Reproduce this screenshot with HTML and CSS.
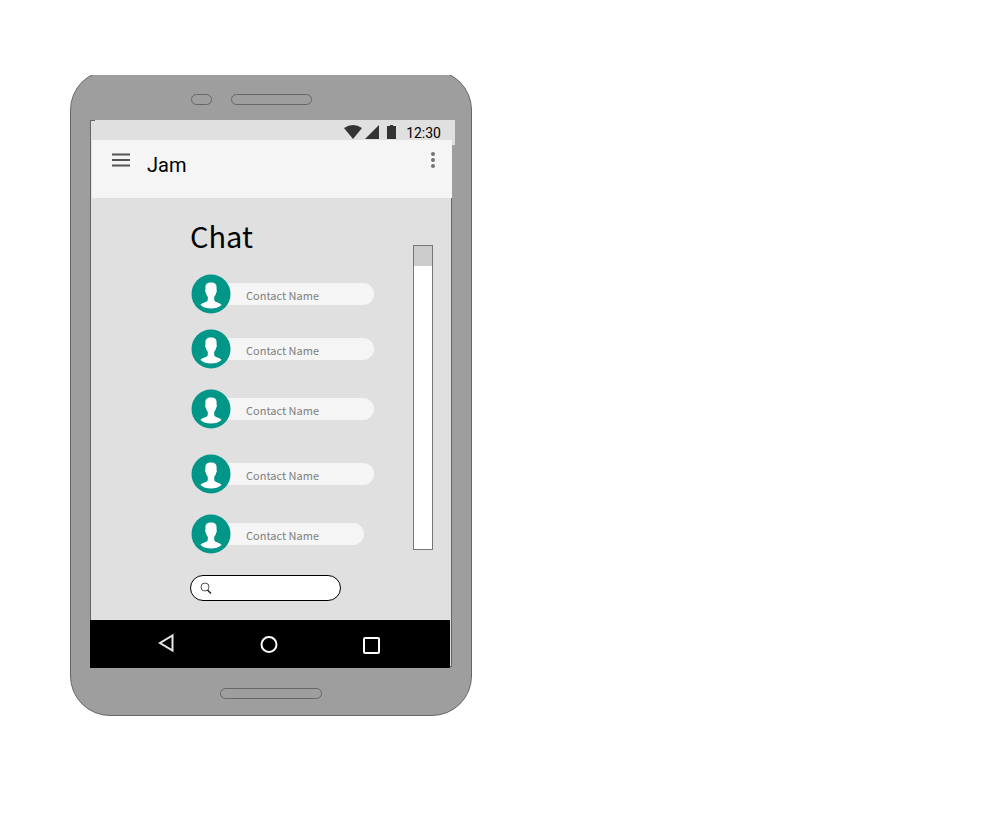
FILE: index.html
```html
<!DOCTYPE html>
<html lang="en">
<head>
<meta charset="utf-8">
<meta name="viewport" content="width=device-width, initial-scale=1">
<title>Jam</title>
<link rel="stylesheet" href="styles.css">
</head>
<body>
<svg class="defs" aria-hidden="true">
  <symbol id="person" viewBox="0 0 40 40">
    <circle cx="20" cy="20" r="19.5" fill="#009688"/>
    <path fill="#fff" d="M20 8.500c4 0 5.600 1.800 5.600 5v2.500c.5.300.3 2.200-.5 2.800-.2 1.700-1 3-1.900 4v3.200c.5 1.500 2 2.200 4 2.800 1.700.5 2.700 1.200 3.300 2.200-2.500 2.300-6.300 3.600-10.500 3.600s-8-1.300-10.500-3.600c.6-1 1.600-1.700 3.300-2.200 2-.6 3.500-1.300 4-2.800v-3.200c-.9-1-1.700-2.300-1.900-4-.8-.6-1-2.500-.5-2.800v-2.500c0-3.200 1.600-5 5.600-5z"/>
  </symbol>
</svg>
<div class="stage">
  <div class="phone">
    <div class="sensors">
      <span class="slot slot-short"></span>
      <span class="slot slot-speaker"></span>
    </div>
    <div class="screen">
      <div class="status">
        <svg width="53" height="16" viewBox="0 0 53 16" fill="#333" aria-hidden="true">
          <path d="M0 4Q9-2 18 4L9 15z"/>
          <path d="M21 15L35 1v14z"/>
          <path d="M43 2h3V1h3v1h3v13h-9z"/>
        </svg>
        <time>12:30</time>
      </div>
      <header class="appbar">
        <button class="icon-button" aria-label="Menu">
          <svg width="18" height="16" viewBox="0 0 18 16" aria-hidden="true"><path d="M0 2.500h18M0 8h18M0 13.500h18" stroke="#555" stroke-width="2"/></svg>
        </button>
        <h1>Jam</h1>
        <button class="icon-button" aria-label="More options">
          <svg width="4" height="16" viewBox="0 0 4 16" fill="#737373" aria-hidden="true"><circle cx="2" cy="2" r="2"/><circle cx="2" cy="8" r="2"/><circle cx="2" cy="14" r="2"/></svg>
        </button>
      </header>
      <main class="content">
        <div class="chat">
          <h2>Chat</h2>
          <ul class="contacts">
            <li><a class="contact" href="#"><svg class="avatar" aria-hidden="true"><use href="#person"/></svg><span class="name">Contact Name</span></a></li>
            <li><a class="contact" href="#"><svg class="avatar" aria-hidden="true"><use href="#person"/></svg><span class="name">Contact Name</span></a></li>
            <li><a class="contact" href="#"><svg class="avatar" aria-hidden="true"><use href="#person"/></svg><span class="name">Contact Name</span></a></li>
            <li><a class="contact" href="#"><svg class="avatar" aria-hidden="true"><use href="#person"/></svg><span class="name">Contact Name</span></a></li>
            <li><a class="contact contact-short" href="#"><svg class="avatar" aria-hidden="true"><use href="#person"/></svg><span class="name">Contact Name</span></a></li>
          </ul>
          <label class="search">
            <svg width="12" height="12" viewBox="0 0 12 12" fill="none" aria-hidden="true"><circle cx="5" cy="5" r="4" stroke="#555"/><path d="M7.500 8L11 11.500" stroke="#222" stroke-width="1.500"/></svg>
            <input type="search" aria-label="Search contacts">
          </label>
        </div>
        <div class="scrollbar"><div class="thumb"></div></div>
      </main>
      <nav class="navbar">
        <button class="icon-button" aria-label="Back">
          <svg width="18" height="22" viewBox="0 0 18 22" fill="none" aria-hidden="true"><path d="M15.500 2.500v15L3 10z" stroke="#e8e8e8" stroke-width="2"/></svg>
        </button>
        <button class="icon-button" aria-label="Home">
          <svg width="18" height="18" viewBox="0 0 18 18" fill="none" aria-hidden="true"><circle cx="9" cy="9.500" r="7.500" stroke="#fff" stroke-width="2"/></svg>
        </button>
        <button class="icon-button" aria-label="Recent apps">
          <svg width="18" height="20" viewBox="0 0 18 20" fill="none" aria-hidden="true"><rect x="2" y="4" width="15" height="15" rx="1" stroke="#fff" stroke-width="2"/></svg>
        </button>
      </nav>
    </div>
    <span class="slot slot-bottom"></span>
  </div>
</div>
</body>
</html>
```
FILE: styles.css
```css
* {
  box-sizing: border-box;
}

body {
  margin: 0;
  padding: 75px 70px;
  background: #fff;
  font-family: Roboto, "Liberation Sans", sans-serif;
  color: #000;
}

.defs {
  display: none;
}

h1, h2, ul {
  margin: 0;
  padding: 0;
  font-weight: 400;
}

.icon-button {
  display: flex;
  padding: 0;
  border: 0;
  background: none;
}

/* Cuts off the top edge of the phone body. */
.stage {
  max-width: 402px;
  overflow: hidden;
}

.phone {
  margin-top: -5px;
  padding: 23px 19px 16px;
  border: 1px solid #666;
  border-radius: 40px;
  background: #9e9e9e;
}

.sensors {
  display: flex;
  gap: 19px;
  margin: 0 0 15px 101px;
}

.slot {
  display: block;
  height: 11px;
  border: 1px solid #666;
  border-radius: 6px;
}

.slot-short {
  width: 21px;
}

.slot-speaker {
  width: 81px;
}

.slot-bottom {
  width: 102px;
  margin: 21px auto 0;
}

.screen {
  border: 1px solid #666;
  background: #e0e0e0;
}

.status {
  display: flex;
  justify-content: flex-end;
  gap: 9px;
  height: 25px;
  margin: -1px -4px 0 4px;
  padding: 4px 14px 0 0;
  background: #e0e0e0;
  font-size: 14px;
  line-height: 18px;
}

.appbar {
  position: relative;
  display: flex;
  align-items: flex-start;
  height: 58px;
  margin: -5px -1px 0 1px;
  padding: 12px 17px 0 20px;
  background: #f5f5f5;
}

.appbar h1 {
  flex: 1;
  margin-left: 17px;
  font-size: 20px;
  line-height: 26px;
}

.content {
  display: flex;
  justify-content: space-between;
  padding: 0 18px 0 99px;
  font-family: "Noto Sans CJK SC", "Noto Sans", sans-serif;
}

.chat {
  flex: 0 1 184px;
  padding: 15px 0 19px;
}

.chat h2 {
  font-size: 29px;
  line-height: 44px;
}

.contacts {
  display: grid;
  grid-template-rows: 55px 60px 65px 60px 39px;
  margin-top: 17px;
  list-style: none;
}

.contact {
  display: flex;
  align-items: center;
  color: #808080;
  text-decoration: none;
}

.avatar {
  position: relative;
  flex: none;
  width: 40px;
  height: 40px;
  margin-left: 1px;
}

.name {
  flex: 1;
  margin-left: -20px;
  padding: 2px 0 0 35px;
  border-radius: 11px;
  background: #f5f5f5;
  font-size: 11px;
  line-height: 20px;
}

.contact-short {
  width: 174px;
}

.search {
  display: flex;
  align-items: center;
  gap: 8px;
  width: 151px;
  height: 26px;
  margin-top: 22px;
  padding: 0 9px;
  border: 1px solid #000;
  border-radius: 13px;
  background: #fff;
}

.search svg {
  flex: none;
}

.search input {
  flex: 1;
  min-width: 0;
  border: 0;
  outline: 0;
  background: none;
  font: inherit;
  font-size: 11px;
}

.scrollbar {
  width: 20px;
  margin: 47px 0 70px;
  border: 1px solid #777;
  background: #fff;
}

.thumb {
  height: 20px;
  background: #ccc;
}

.navbar {
  position: relative;
  display: flex;
  justify-content: space-between;
  align-items: center;
  height: 48px;
  margin: 0 1px -2px -1px;
  padding: 0 70px 0 67px;
  background: #000;
}
```
